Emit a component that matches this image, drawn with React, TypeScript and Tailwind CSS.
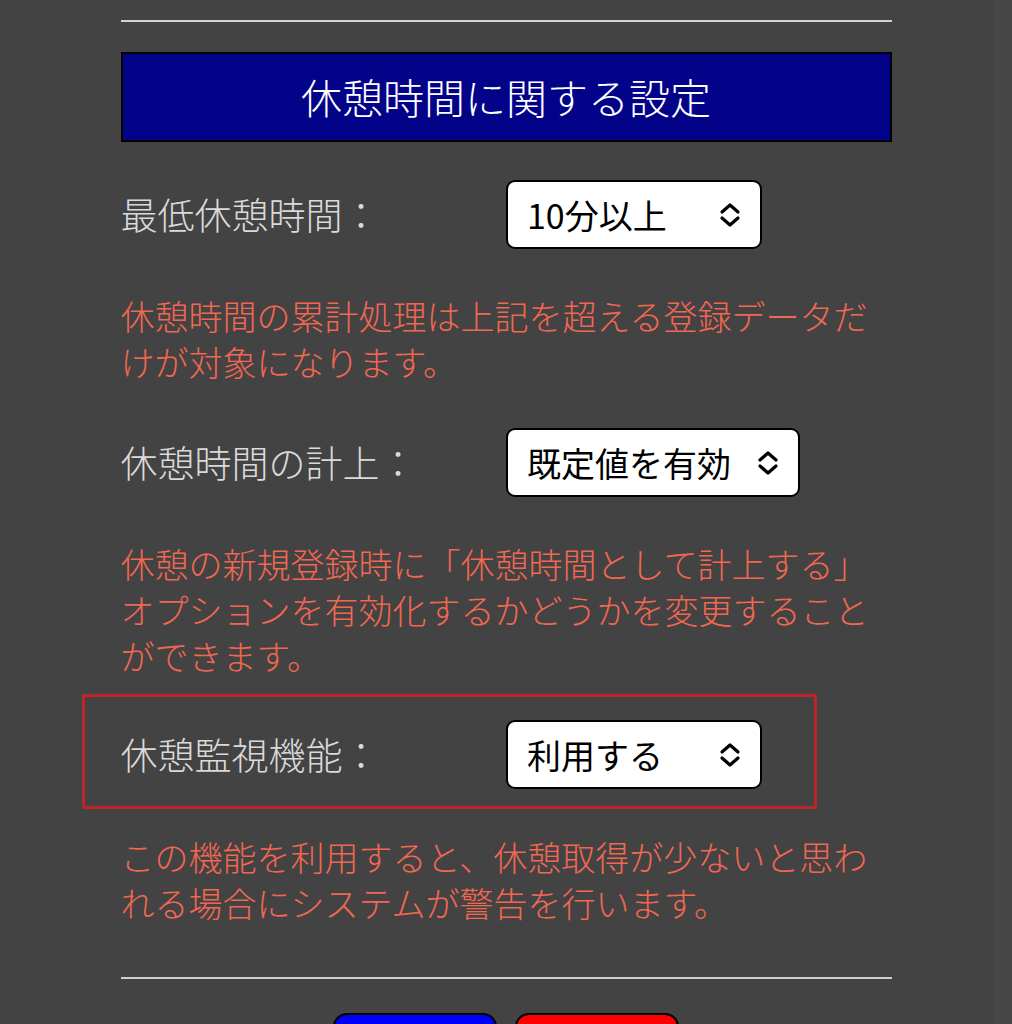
import type { ReactNode } from "react";

const jp = "font-['Noto_Sans_CJK_JP','Noto_Sans',sans-serif]";

function UpDown() {
  return (
    <svg width="24" height="28" viewBox="0 0 24 28" fill="none" stroke="#000" strokeWidth="3.2" strokeLinecap="round" strokeLinejoin="round">
      <polyline points="4,11 12,4 20,11" />
      <polyline points="4,17 12,24 20,17" />
    </svg>
  );
}

function Select({ value, wide }: { value: string; wide?: boolean }) {
  return (
    <div
      className={`flex h-[69px] items-center justify-between rounded-[9px] border-2 border-black bg-white pl-[19px] pr-[18px] text-[34px] text-black ${
        wide ? "gap-[25px]" : "w-[256px]"
      }`}
    >
      <span className="leading-none">{value}</span>
      <UpDown />
    </div>
  );
}

function Row({ label, children }: { label: string; children: ReactNode }) {
  return (
    <div className="grid grid-cols-2 items-center">
      <span className="text-[37px] font-light leading-none text-[#dadada]">{label}</span>
      <div className="flex">{children}</div>
    </div>
  );
}

function Note({ children }: { children: ReactNode }) {
  return <p className="text-[34px] font-light leading-[46px] text-[#f26752]">{children}</p>;
}

export default function App() {
  return (
    <main className={`min-h-screen bg-[linear-gradient(to_right,#434343_995px,#474747_995px)] pt-[20px] ${jp}`}>
      <div className="mx-auto flex w-[771px] flex-col">
        <hr className="border-t-2 border-[#d2d2d2]" />

        <h2 className="mt-[30px] flex h-[90px] items-center justify-center border-2 border-black bg-[#03038a] text-[41px] font-light text-white">
          休憩時間に関する設定
        </h2>

        <div className="mt-[38px]">
          <Row label="最低休憩時間：">
            <Select value="10分以上" />
          </Row>
        </div>

        <div className="mt-[44px]">
          <Note>休憩時間の累計処理は上記を超える登録データだけが対象になります。</Note>
        </div>

        <div className="mt-[43px]">
          <Row label="休憩時間の計上：">
            <Select value="既定値を有効" wide />
          </Row>
        </div>

        <div className="mt-[44px]">
          <Note>休憩の新規登録時に「休憩時間として計上する」オプションを有効化するかどうかを変更することができます。</Note>
        </div>

        <div className="relative mt-[41px]">
          <Row label="休憩監視機能：">
            <Select value="利用する" />
          </Row>
          <div className="pointer-events-none absolute -left-[39px] -top-[26px] h-[115px] w-[735px] rounded-[2px] border-[3px] border-[#bd2629]" />
        </div>

        <div className="mt-[45px]">
          <Note>この機能を利用すると、休憩取得が少ないと思われる場合にシステムが警告を行います。</Note>
        </div>

        <hr className="mt-[51px] border-t-2 border-[#cfcfcf]" />

        <div className="mt-[34px] flex justify-center gap-[18px] pb-10">
          <button className="h-[64px] w-[164px] rounded-[14px] border-2 border-black bg-[#0000ff]" />
          <button className="h-[64px] w-[164px] rounded-[14px] border-2 border-black bg-[#ff0000]" />
        </div>
      </div>
    </main>
  );
}
